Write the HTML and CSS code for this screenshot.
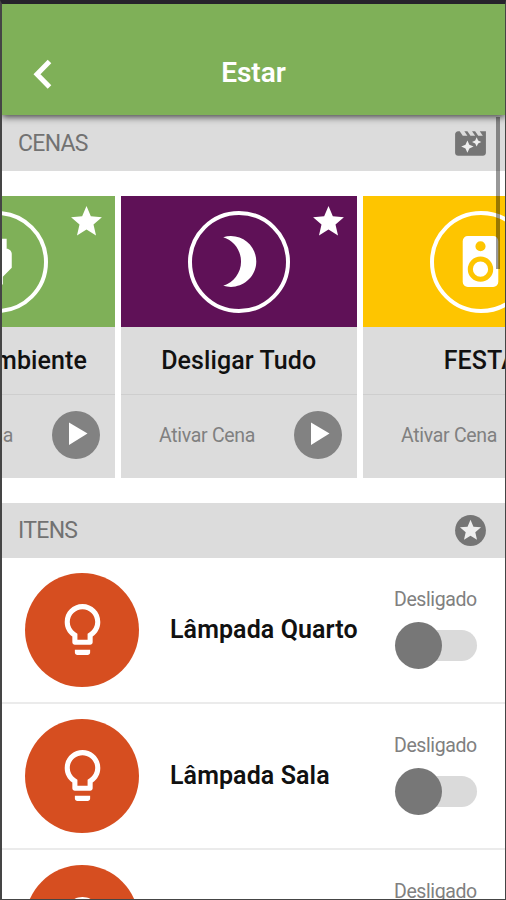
FILE: index.html
```html
<!DOCTYPE html>
<html lang="pt-BR">
<head>
<meta charset="utf-8">
<title>Estar</title>
<link rel="stylesheet" href="styles.css">
</head>
<body>
<svg class="defs" width="0" height="0">
  <symbol id="star" viewBox="0 0 24 24"><path d="M12 17.27L18.18 21l-1.64-7.03L22 9.24l-7.19-.61L12 2 9.19 8.63 2 9.24l5.46 4.73L5.82 21z"/></symbol>
  <symbol id="play" viewBox="0 0 48 48"><path d="M17 11.500L35.500 22.500 17 34z"/></symbol>
  <symbol id="bulb" viewBox="0 0 24 24"><path d="M9 21c0 .55.45 1 1 1h4c.55 0 1-.45 1-1v-1H9v1zm3-19C8.14 2 5 5.14 5 9c0 2.38 1.19 4.47 3 5.74V17c0 .55.45 1 1 1h6c.55 0 1-.45 1-1v-2.26c1.81-1.27 3-3.36 3-5.74 0-3.86-3.14-7-7-7zm2.85 11.1l-.85.6V16h-4v-2.3l-.85-.6C7.8 12.16 7 10.63 7 9c0-2.76 2.24-5 5-5s5 2.24 5 5c0 1.63-.8 3.16-2.15 4.1z"/></symbol>
</svg>
<div class="screen">
  <header class="bar">
    <svg class="back" viewBox="0 0 20 32"><path d="M17.500 3.500L5 16.200l12.500 12.700"/></svg>
    <h1>Estar</h1>
  </header>
  <main class="content">
    <div class="scrollbar"></div>
    <div class="section first">
      <span>CENAS</span>
      <svg viewBox="0 0 24 24"><path d="M18 4l2 3h-3l-2-3h-2l2 3h-3l-2-3H8l2 3H7L5 4H4c-1.100 0-1.990.9-1.990 2L2 18c0 1.100.9 2 2 2h16c1.100 0 2-.9 2-2V4h-4z"/><path class="spark" d="M11.250 15.250L10 18l-1.250-2.750L6 14l2.750-1.250L10 10l1.250 2.750L14 14zM16.940 11.940L16 14l-.94-2.060L13 11l2.060-.94L16 8l.94 2.060L19 11z"/></svg>
    </div>
    <div class="scenes">
      <article class="card">
        <div class="cover green">
          <div class="ring"><svg viewBox="0 0 24 24"><path d="M16.010 7L16 3h-2v4h-4V3H8v4h-.01C7 6.990 6 7.990 6 8.990v5.490L9.500 18v3h5v-3l3.500-3.510v-5.500c0-1-1-2-1.990-1.990z"/></svg></div>
          <svg class="fav"><use href="#star"/></svg>
        </div>
        <h2 class="end">Ambiente</h2>
        <div class="action"><span>Ativar Cena</span><svg class="play"><use href="#play"/></svg></div>
      </article>
      <article class="card">
        <div class="cover purple">
          <div class="ring"><svg viewBox="0 0 24 24"><path d="M9 2c-1.050 0-2.050.16-3 .46 4.060 1.270 7 5.060 7 9.540 0 4.480-2.940 8.270-7 9.540.95.3 1.950.46 3 .46 5.520 0 10-4.480 10-10S14.520 2 9 2z"/></svg></div>
          <svg class="fav"><use href="#star"/></svg>
        </div>
        <h2>Desligar Tudo</h2>
        <div class="action"><span>Ativar Cena</span><svg class="play"><use href="#play"/></svg></div>
      </article>
      <article class="card">
        <div class="cover yellow">
          <div class="ring"><svg viewBox="0 0 24 24"><path fill-rule="evenodd" d="M7 2h10a2 2 0 0 1 2 2v16a2 2 0 0 1-2 2H7a2 2 0 0 1-2-2V4a2 2 0 0 1 2-2zM12 4a2 2 0 1 0 0 4 2 2 0 0 0 0-4zM12 10a5 5 0 1 0 0 10 5 5 0 0 0 0-10zM12 12a3 3 0 1 1 0 6 3 3 0 0 1 0-6z"/></svg></div>
        </div>
        <h2>FESTA</h2>
        <div class="action"><span>Ativar Cena</span><svg class="play"><use href="#play"/></svg></div>
      </article>
    </div>
    <div class="section">
      <span>ITENS</span>
      <svg viewBox="0 0 24 24"><circle cx="12" cy="12" r="10"/><path class="spark" d="M16.230 18L12 15.450 7.770 18l1.120-4.810-3.730-3.230 4.920-.42L12 5l1.920 4.530 4.920.42-3.730 3.230z"/></svg>
    </div>
    <ul class="items">
      <li><div class="lamp"><svg><use href="#bulb"/></svg></div><strong>Lâmpada Quarto</strong><div class="state"><span>Desligado</span><div class="switch"></div></div></li>
      <li><div class="lamp"><svg><use href="#bulb"/></svg></div><strong>Lâmpada Sala</strong><div class="state"><span>Desligado</span><div class="switch"></div></div></li>
      <li><div class="lamp"><svg><use href="#bulb"/></svg></div><strong></strong><div class="state"><span>Desligado</span><div class="switch"></div></div></li>
    </ul>
  </main>
</div>
</body>
</html>
```
FILE: styles.css
```css
* { box-sizing: border-box; }
body { margin: 0; font-family: Roboto, "Liberation Sans", sans-serif; }
.defs { display: block; }
.screen {
  width: 506px; height: 900px; overflow: hidden;
  display: flex; flex-direction: column;
  background: #fff;
  border: solid #454545; border-width: 4px 1px 1px 2px;
  border-top-color: #26232b;
}
.bar {
  height: 111px; flex: none; position: relative; z-index: 3;
  display: grid; grid-template-columns: 80px 1fr 80px; align-items: center;
  padding-top: 26px;
  background: #7fb058; color: #fff;
  box-shadow: 0 2px 7px rgba(0, 0, 0, .7);
}
.back { width: 20px; height: 32px; margin: 3px 0 0 30px; fill: none; stroke: #fff; stroke-width: 5; }
.bar h1 { margin: 0; text-align: center; font-size: 28px; font-weight: 600; line-height: 34px; }
.content { flex: 1; min-height: 0; position: relative; }
.scrollbar { position: absolute; z-index: 2; right: 5px; top: 2px; width: 4px; height: 152px; background: rgba(0, 0, 0, .4); }
.section {
  height: 55px; padding: 0 16px;
  display: flex; align-items: center; justify-content: space-between;
  background: #dcdcdc; color: #727272; font-size: 23px; letter-spacing: -.7px;
}
.section.first { height: 56px; padding-top: 1px; }
.section svg { width: 37px; height: 37px; fill: #757575; }
.section .spark { fill: #eee; }
.scenes { display: flex; gap: 6.500px; margin: 25px 0 24.500px -123px; width: 721px; }
.card { width: 235.500px; height: 282px; flex: none; background: #dcdcdc; }
.cover { height: 131px; position: relative; display: flex; align-items: center; justify-content: center; }
.green { background: #7fb058; }
.purple { background: #5f1157; }
.yellow { background: #fec500; }
.ring { width: 102px; height: 102px; border: 4px solid #fff; border-radius: 50%; display: flex; align-items: center; justify-content: center; }
.ring svg { width: 61px; height: 61px; flex: none; fill: #fff; }
.fav { position: absolute; top: 7px; right: 10px; width: 37px; height: 37px; fill: #fff; }
.card h2 { margin: 0; height: 68px; line-height: 67px; text-align: center; font-size: 25px; letter-spacing: .1px; font-weight: 500; color: #111; border-bottom: 1px solid #cecece; }
.card h2.end { text-align: right; padding-right: 27.500px; }
.action { height: 80px; display: flex; align-items: center; justify-content: space-between; padding: 0 15px 0 38px; font-size: 19.500px; letter-spacing: -.3px; color: #808080; }
.play { width: 48px; height: 48px; border-radius: 50%; background: #828282; fill: #fff; }
.items { list-style: none; margin: 0; padding: 0; }
.items li { height: 146.300px; display: flex; align-items: center; padding: 0 27px 0 23px; border-bottom: 2px solid #ebebeb; }
.lamp { width: 114px; height: 114px; flex: none; border-radius: 50%; background: #d64e20; display: flex; align-items: center; justify-content: center; }
.lamp svg { width: 61px; height: 61px; fill: #fff; }
.items strong { flex: 1; margin: -1px 0 0 31px; font-size: 25px; letter-spacing: .1px; font-weight: 600; color: #111; white-space: nowrap; }
.state { width: 83px; margin: -3px 0 0; font-size: 19.500px; letter-spacing: -.4px; line-height: 24px; color: #808080; white-space: nowrap; }
.state span { display: block; margin-left: -1px; }
.switch { position: relative; width: 83px; height: 47px; margin-top: 10px; display: flex; align-items: center; }
.switch::before { content: ""; width: 69px; height: 31px; margin-left: 13px; border-radius: 16px; background: #dadada; }
.switch::after { content: ""; position: absolute; left: 0; top: 0; width: 47px; height: 47px; border-radius: 50%; background: #777; }
```
